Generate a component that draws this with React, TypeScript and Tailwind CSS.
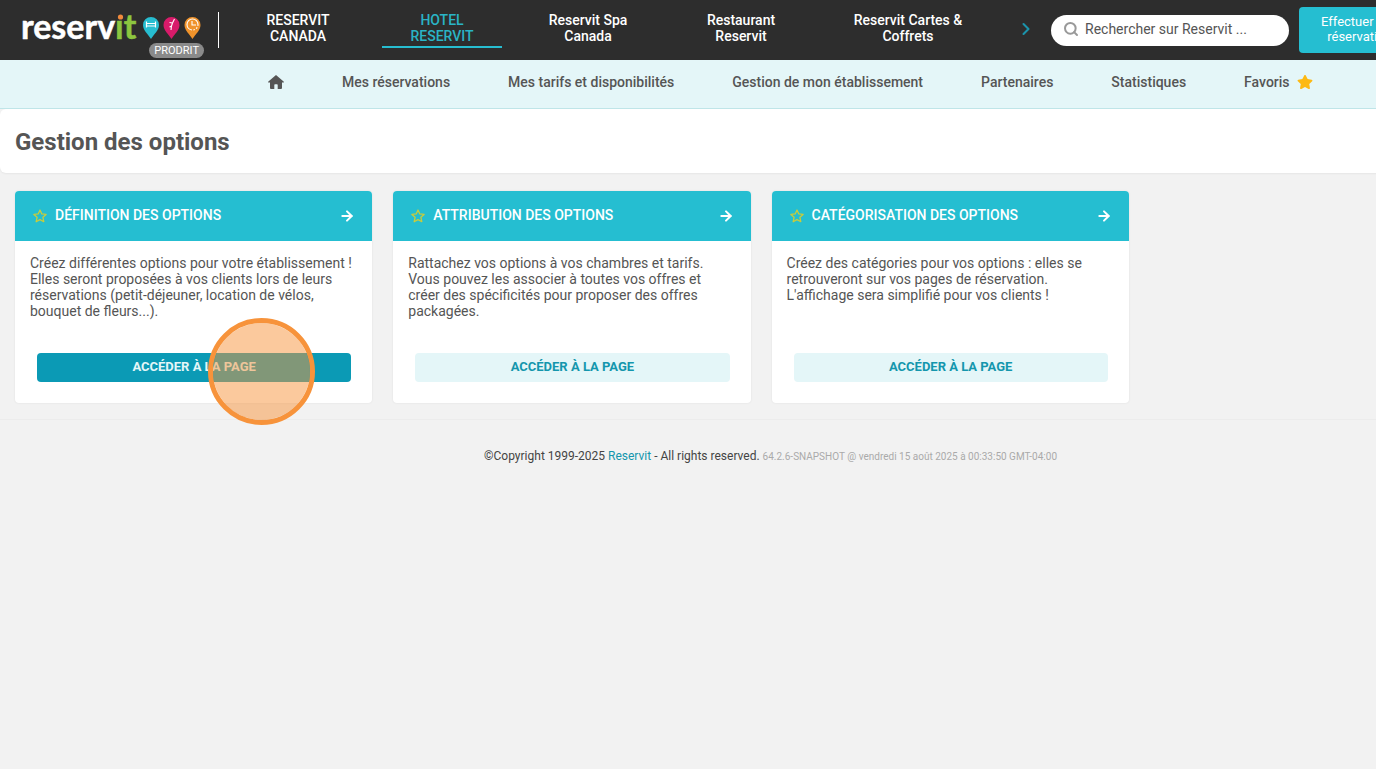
import { ArrowRight, ChevronRight, Search } from "lucide-react";
import { FaStar } from "react-icons/fa";
import clsx from "clsx";

interface Product {
  lines: [string, string];
  width: string;
  active?: boolean;
}

interface OptionCard {
  title: string;
  description: string;
  highlighted?: boolean;
}

const products: Product[] = [
  { lines: ["RESERVIT", "CANADA"], width: "w-36" },
  { lines: ["HOTEL", "RESERVIT"], width: "w-36", active: true },
  { lines: ["Reservit Spa", "Canada"], width: "w-37" },
  { lines: ["Restaurant", "Reservit"], width: "w-[158px]" },
  { lines: ["Reservit Cartes &", "Coffrets"], width: "w-44" },
];

const menu = [
  "Mes réservations",
  "Mes tarifs et disponibilités",
  "Gestion de mon établissement",
  "Partenaires",
  "Statistiques",
];

const cards: OptionCard[] = [
  {
    title: "Définition des options",
    description:
      "Créez différentes options pour votre établissement ! Elles seront proposées à vos clients lors de leurs réservations (petit-déjeuner, location de vélos, bouquet de fleurs...).",
    highlighted: true,
  },
  {
    title: "Attribution des options",
    description:
      "Rattachez vos options à vos chambres et tarifs. Vous pouvez les associer à toutes vos offres et créer des spécificités pour proposer des offres packagées.",
  },
  {
    title: "Catégorisation des options",
    description:
      "Créez des catégories pour vos options : elles se retrouveront sur vos pages de réservation. L'affichage sera simplifié pour vos clients !",
  },
];

function Logo() {
  return (
    <svg width="184" height="48" viewBox="0 -8 184 48" role="img" aria-label="reservit">
      <text x="-1" y="27" fontFamily="Lato, sans-serif" fontWeight="700" fontSize="34" fill="#fff" stroke="#fff" strokeWidth="0.500">
        reserv
        <tspan fill="#8cc63f" stroke="#8cc63f">ıt</tspan>
      </text>
      <circle cx="98.500" cy="5" r="2.600" fill="#f08a3c" />
      {/* bed */}
      <path d="M129 27c-3-5-8-8.500-8-14a8 8 0 0 1 16 0c0 5.500-5 9-8 14z" fill="#27bdd0" />
      <path d="M124.500 9.500v6M124.500 14h9M133.500 9.500v6M125 11.500h8" stroke="#fff" strokeWidth="1.200" fill="none" />
      {/* spa */}
      <path d="M149.500 27c-3-5-8-8.500-8-14a8 8 0 0 1 16 0c0 5.500-5 9-8 14z" fill="#d81b6a" />
      <path d="M152.500 7l-2 4M150.500 11l-3-.5M150.500 11l-1 3-2 1M149.500 14l-.5 4" stroke="#fff" strokeWidth="1.100" fill="none" />
      {/* clock */}
      <path d="M170.500 27c-3-5-8-8.500-8-14a8 8 0 0 1 16 0c0 5.500-5 9-8 14z" fill="#f0932b" />
      <circle cx="170.500" cy="12.500" r="5.500" stroke="#fff" strokeWidth="1.100" strokeDasharray="1.500 1.500 1.500 1.500 1.500 1.500 26" fill="none" />
      <path d="M170 9v4h4" stroke="#fff" strokeWidth="1.100" fill="none" />
    </svg>
  );
}

function HomeIcon() {
  return (
    <svg width="16" height="14" viewBox="0 0 16 14" fill="currentColor" aria-hidden="true">
      <path d="M8 0L.4 6.600q-.8.900.4.900H2V13q0 1 1 1h3.300V10q0-.7.700-.7h2q.7 0 .7.700v4H13q1 0 1-1V7.500h1.200q1.200 0 .4-.9z" />
    </svg>
  );
}

function StarOutline() {
  return (
    <svg width="14" height="14" viewBox="0 0 14 14" fill="none" stroke="#c9cc3b" strokeWidth="1.300" strokeLinejoin="round" aria-hidden="true">
      <path d="M7 1l1.800 3.900 4.300.5-3.200 2.900.9 4.400L7 10.600l-3.800 2.100.9-4.400L.9 5.400l4.300-.5z" />
    </svg>
  );
}

function TopBar() {
  return (
    <header className="flex h-15 items-center bg-[#2d2d2d]">
      <div className="relative ml-[22px] h-full w-[184px] shrink-0 pt-1">
        <a href="#">
          <Logo />
        </a>
        <span className="absolute right-0.5 bottom-0.5 rounded-full bg-[#8a8a8a] px-[5px] text-[11px] leading-[15px] text-white">
          PRODRIT
        </span>
      </div>
      <div className="ml-3 h-9 w-px shrink-0 bg-white" />
      <nav className="ml-[7px] pb-0.5">
        <ul className="flex">
          {products.map(({ lines, width, active }) => (
            <li key={lines.join(" ")} className={clsx("flex shrink-0 justify-center", width)}>
              <a
                href="#"
                className={clsx(
                  "border-b-2 pt-0.5 pb-0.5 text-center text-sm leading-4 font-medium whitespace-nowrap",
                  active ? "border-[#27bdd0] px-7 text-[#2ab4c6]" : "border-transparent text-white"
                )}
              >
                {lines[0]}
                <br />
                {lines[1]}
              </a>
            </li>
          ))}
        </ul>
      </nav>
      <button type="button" aria-label="Suivant" className="ml-5 shrink-0 pb-0.5 text-[#1b93ab]">
        <ChevronRight className="size-5" strokeWidth={2.5} />
      </button>
      <label className="ml-[15px] flex h-[31px] w-[238px] shrink-0 items-center rounded-full bg-white pb-0.5 pl-3">
        <Search className="size-4 shrink-0 text-[#999]" strokeWidth={3} />
        <input
          type="text"
          aria-label="Rechercher"
          placeholder="Rechercher sur Reservit ..."
          className="ml-1.5 w-full bg-transparent text-sm text-[#444] outline-none placeholder:text-[#555]"
        />
      </label>
      <button
        type="button"
        className="ml-2.5 h-[46px] shrink-0 rounded bg-[#25bed1] px-[22px] pb-0.5 text-[13px] leading-[15px] text-white"
      >
        Effectuer une
        <br />
        réservation
      </button>
    </header>
  );
}

function MainMenu() {
  return (
    <nav className="flex h-[49px] gap-[58px] border-b border-[#bfe5e8] bg-[#e4f6f8] pt-[13px] pl-[268px] text-sm leading-[18px] font-medium whitespace-nowrap text-[#555]">
      <a href="#" aria-label="Accueil" className="pt-0.5">
        <HomeIcon />
      </a>
      {menu.map((item) => (
        <a key={item} href="#">
          {item}
        </a>
      ))}
      <a href="#" className="flex gap-[7px]">
        Favoris
        <FaStar className="mt-px size-4 text-[#fdb913]" />
      </a>
    </nav>
  );
}

function Card({ title, description, highlighted }: OptionCard) {
  return (
    <article className="flex flex-col rounded bg-white shadow-[0_0_2px_#dddddd]">
      <div className="flex h-[50px] items-center rounded-t bg-[#25bed1] pr-[17px] pl-[18px] text-white">
        <button type="button" aria-label="Ajouter aux favoris">
          <StarOutline />
        </button>
        <h2 className="ml-2 flex-1 pb-0.5 text-sm leading-4 font-medium uppercase">{title}</h2>
        <ArrowRight className="size-4" strokeWidth={3} />
      </div>
      <p className="px-[15px] pt-3.5 text-sm leading-4 text-[#555]">{description}</p>
      <div className="relative mr-[21px] ml-[22px] mt-auto pt-[34px] pb-[21px]">
        <a
          href="#"
          className={clsx(
            "block rounded pb-0.5 text-center text-[13px] leading-[27px] font-bold uppercase",
            highlighted ? "bg-[#0b9ab5] text-[#e4f6f8]" : "bg-[#e4f6f8] text-[#1496ad]"
          )}
        >
          Accéder à la page
        </a>
        {highlighted && (
          <span className="pointer-events-none absolute -top-px right-9 size-[107px] rounded-full border-5 border-[#f7933b] bg-[#f7933b]/50 bg-clip-padding" />
        )}
      </div>
    </article>
  );
}

export default function App() {
  return (
    <div className="min-h-screen overflow-x-hidden bg-[#f2f2f2] font-['Roboto',sans-serif]">
      {/* the page is laid out wider than the window, the rest is clipped */}
      <div className="w-[112%]">
        <TopBar />
        <MainMenu />
        <div className="rounded-md bg-white px-[15px] pt-[17px] pb-[15px] shadow-xs">
          <h1 className="text-2xl leading-8 font-bold text-[#555]">Gestion des options</h1>
        </div>
        <main className="grid grid-cols-4 gap-[21px] pt-[18px] pr-[34px] pb-4 pl-[15px]">
          {cards.map((card) => (
            <Card key={card.title} {...card} />
          ))}
        </main>
        <footer className="border-t border-[#ececec] pt-7 text-center text-xs leading-4 text-[#444]">
          ©Copyright 1999-2025{" "}
          <a href="#" className="text-[#1496ad]">
            Reservit
          </a>{" "}
          - All rights reserved.{" "}
          <small className="text-[10px] text-[#aaa]">
            64.2.6-SNAPSHOT @ vendredi 15 août 2025 à 00:33:50 GMT-04:00
          </small>
        </footer>
      </div>
    </div>
  );
}
